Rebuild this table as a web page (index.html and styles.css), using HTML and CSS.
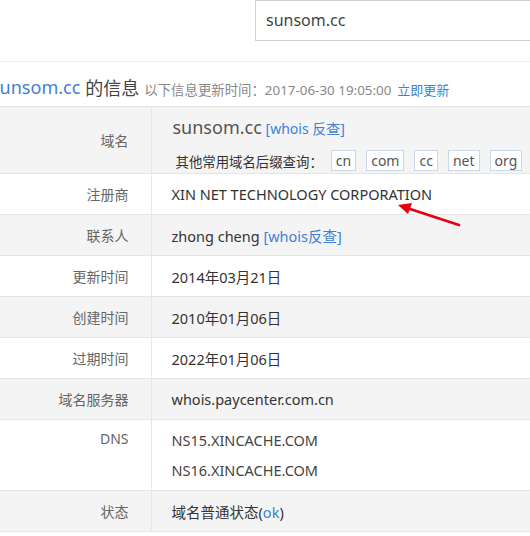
FILE: index.html
```html
<!DOCTYPE html>
<html lang="zh-CN">
<head>
<meta charset="utf-8">
<title>sunsom.cc 的信息</title>
<link rel="stylesheet" href="styles.css">
</head>
<body>
<div class="page">
  <div class="search">
    <div class="search-box">sunsom.cc</div>
  </div>
  <div class="title">
    <span class="domain">sunsom.cc</span>
    <span class="title-rest">的信息</span>
    <span class="update">以下信息更新时间：2017-06-30 19:05:00</span>
    <a class="link update-link" href="#">立即更新</a>
  </div>
  <table class="info">
    <colgroup><col class="col-label"><col></colgroup>
    <tr class="row-gray row-domain">
      <th>域名</th>
      <td>
        <div class="domain-line"><span class="big-domain">sunsom.cc</span> <a class="link" href="#">[whois 反查]</a></div>
        <div class="suffix-line">
          <span class="suffix-label">其他常用域名后缀查询：</span>
          <a class="tag" href="#">cn</a>
          <a class="tag" href="#">com</a>
          <a class="tag" href="#">cc</a>
          <a class="tag" href="#">net</a>
          <a class="tag" href="#">org</a>
        </div>
      </td>
    </tr>
    <tr>
      <th>注册商</th>
      <td>XIN NET TECHNOLOGY CORPORATION</td>
    </tr>
    <tr class="row-gray">
      <th>联系人</th>
      <td>zhong cheng <a class="link" href="#">[whois反查]</a></td>
    </tr>
    <tr>
      <th>更新时间</th>
      <td>2014年03月21日</td>
    </tr>
    <tr class="row-gray">
      <th>创建时间</th>
      <td>2010年01月06日</td>
    </tr>
    <tr>
      <th>过期时间</th>
      <td>2022年01月06日</td>
    </tr>
    <tr class="row-gray">
      <th>域名服务器</th>
      <td>whois.paycenter.com.cn</td>
    </tr>
    <tr class="row-dns">
      <th>DNS</th>
      <td><div class="dns">NS15.XINCACHE.COM</div><div class="dns">NS16.XINCACHE.COM</div></td>
    </tr>
    <tr class="row-gray">
      <th>状态</th>
      <td>域名普通状态(<a class="link" href="#">ok</a>)</td>
    </tr>
  </table>
  <svg class="arrow" width="70" height="30" viewBox="0 0 70 30">
    <line x1="64" y1="25" x2="12" y2="8" stroke="#e60012" stroke-width="2.6" stroke-linecap="round"/>
    <polygon points="3,5 17,3 13,14" fill="#e60012"/>
  </svg>
</div>
</body>
</html>
```
FILE: styles.css
```css
html, body {
  margin: 0;
  padding: 0;
  background: #fff;
  overflow: hidden;
}
.page {
  position: relative;
  width: 530px;
  height: 536px;
  overflow: hidden;
  font-family: "Noto Sans", "Noto Sans CJK SC", sans-serif;
  color: #333;
}
.search {
  display: flex;
  padding-left: 255px;
  height: 41px;
  margin-bottom: 20px;
}
.search-box {
  flex: 1;
  margin-right: -20px;
  border: 1px solid #d0d0d0;
  box-sizing: border-box;
  height: 41px;
  padding-left: 10px;
  font-size: 16px;
  line-height: 39px;
  color: #444;
}
.title {
  border-top: 1px solid #eeeeee;
  height: 45px;
  box-sizing: border-box;
  padding-top: 6px;
  display: flex;
  align-items: center;
  margin-left: -9px;
  white-space: nowrap;
}
.domain {
  font-size: 18px;
  color: #3f7fd6;
}
.title-rest {
  font-size: 18px;
  color: #444;
  margin-left: 5px;
}
.update {
  font-size: 13.4px;
  color: #888;
  margin-left: 5px;
  padding-top: 4px;
}
.update-link {
  font-size: 13px;
  margin-left: 6px;
  padding-top: 4px;
}
.link {
  color: #3f7fd6;
  text-decoration: none;
}
.info {
  width: 100%;
  table-layout: fixed;
  border-collapse: collapse;
  border-top: 1px solid #e6e6e6;
}
.col-label {
  width: 151px;
}
.info tr {
  height: 41px;
  border-bottom: 1px solid #e6e6e6;
}
.info th {
  text-align: right;
  font-weight: normal;
  color: #666;
  font-size: 14px;
  padding: 0 22px 0 0;
  border-right: 1px solid #e6e6e6;
}
.info td {
  padding: 0 0 0 20px;
  font-size: 14.5px;
  color: #333;
  white-space: nowrap;
}
.row-gray {
  background: #f4f4f4;
}
.info .row-domain {
  height: 67px;
}
.info .row-domain td {
  vertical-align: top;
  padding-top: 8px;
  padding-left: 21px;
}
.domain-line {
  line-height: 24px;
}
.big-domain {
  font-size: 18px;
  color: #555;
}
.domain-line .link {
  font-size: 14px;
}
.suffix-line {
  display: flex;
  align-items: center;
  margin-top: 9px;
  padding-left: 3px;
}
.suffix-label {
  font-size: 13.4px;
  color: #333;
  margin-right: 8px;
}
.tag {
  display: inline-block;
  background: #fff;
  border: 1px solid #c9d9ea;
  color: #555;
  font-size: 14px;
  height: 21px;
  line-height: 19px;
  padding: 0 4px;
  box-sizing: border-box;
  margin-right: 10px;
  text-decoration: none;
}
.info .row-dns {
  height: 71px;
}
.info .row-dns th {
  vertical-align: top;
  padding-top: 9px;
}
.dns {
  line-height: 30px;
  color: #444;
}
.arrow {
  position: absolute;
  left: 395px;
  top: 200px;
}
```
